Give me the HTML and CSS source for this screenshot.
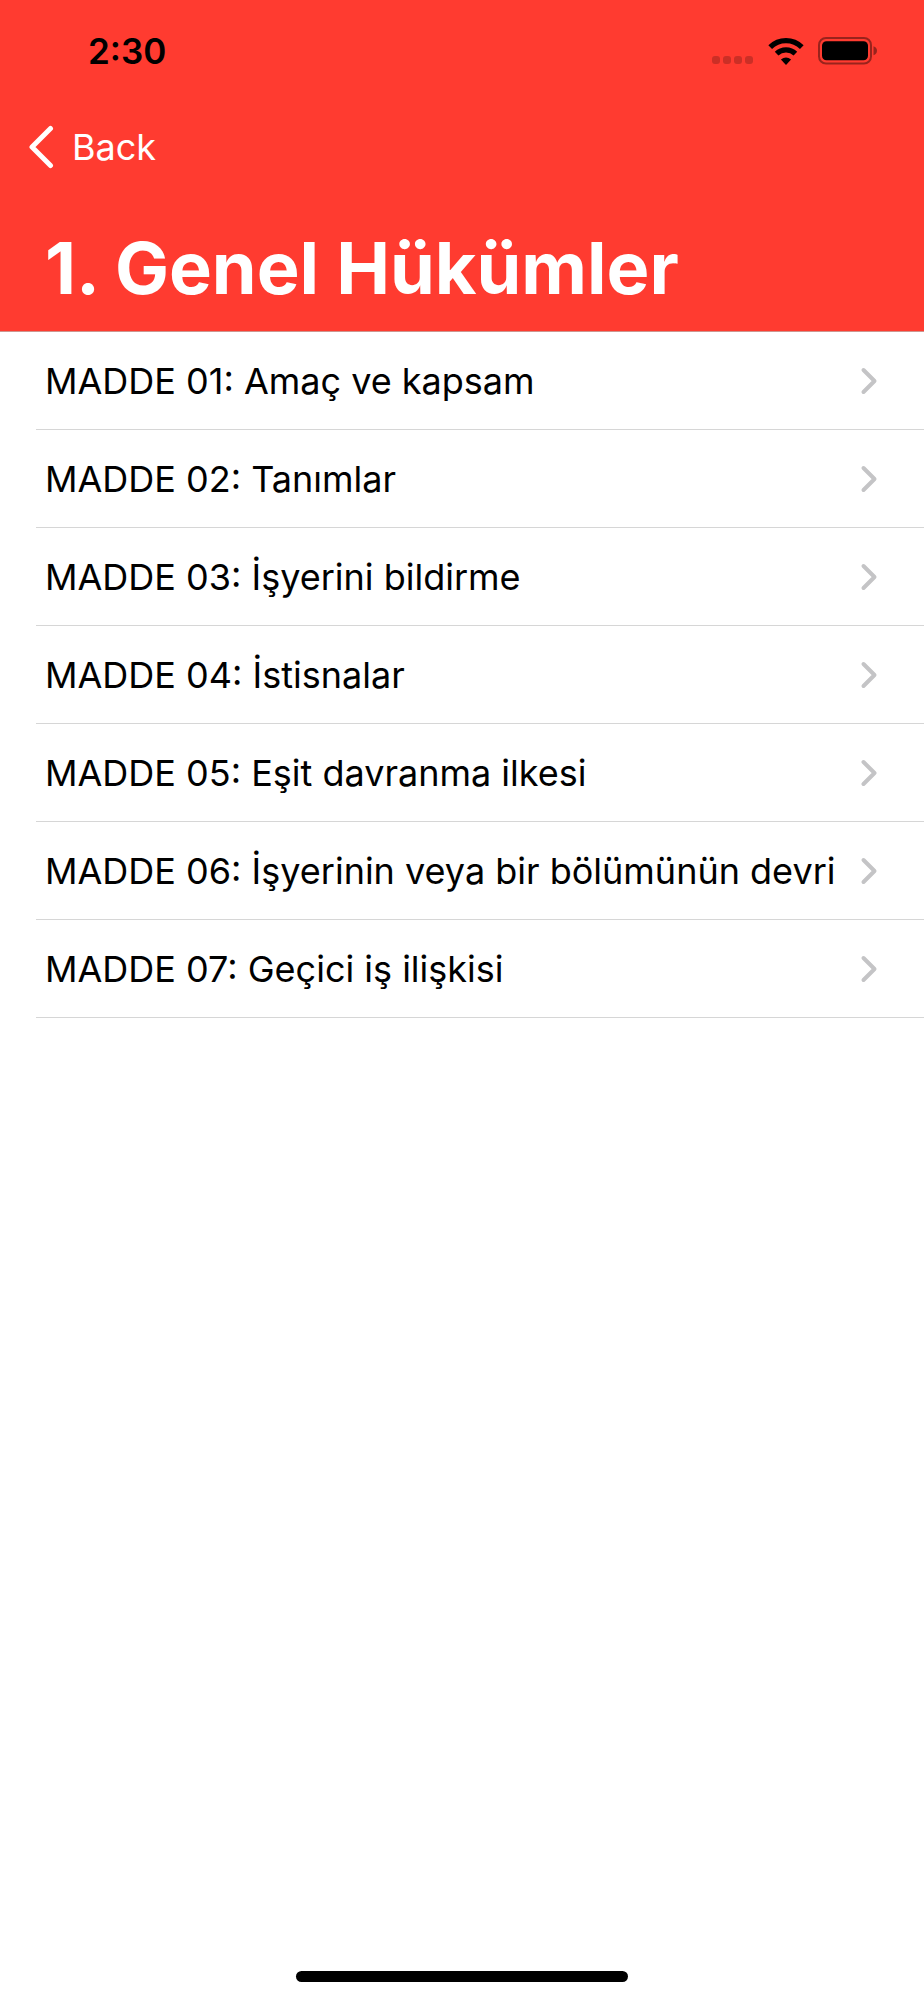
FILE: index.html
```html
<!DOCTYPE html>
<html lang="tr">
<head>
<meta charset="utf-8">
<meta name="viewport" content="width=device-width, initial-scale=1">
<title>1. Genel Hükümler</title>
<link rel="stylesheet" href="styles.css">
</head>
<body>
<div class="screen">
  <header class="header">
    <div class="status">
      <time class="status-time">2:30</time>
      <div class="status-icons">
        <svg class="signal" viewBox="0 0 42 8" aria-hidden="true"><rect x="0" width="8" height="8" rx="3"/><rect x="11" width="8" height="8" rx="3"/><rect x="22" width="8" height="8" rx="3"/><rect x="33" width="8" height="8" rx="3"/></svg>
        <svg class="wifi" viewBox="0 0 36 27" aria-hidden="true"><path d="M2.200 9.200A22.500 22.500 0 0 1 33.800 9.200" stroke-width="5.200"/><path d="M8.600 15.600A13.500 13.500 0 0 1 27.400 15.600" stroke-width="5.200"/><path class="wifi-dot" d="M18 27L12.900 21.600Q18 17.200 23.100 21.600Z"/></svg>
        <svg class="battery" viewBox="0 0 60 28" aria-hidden="true"><rect class="battery-shell" x="1" y="1" width="52" height="25.500" rx="7"/><rect x="4" y="4.300" width="46" height="19" rx="4.500"/><path class="battery-cap" d="M55.500 9.300Q59 10.500 59 13.800Q59 17 55.500 18.300Z"/></svg>
      </div>
    </div>
    <nav class="nav">
      <button class="back" type="button">
        <svg class="back-icon" viewBox="0 0 26 44" aria-hidden="true"><path d="M22.500 3.500L4 22L22.500 40.500"/></svg>
        <span>Back</span>
      </button>
    </nav>
    <h1 class="title">1. Genel Hükümler</h1>
  </header>
  <main class="content">
    <ul class="list">
      <li class="item"><a class="row" href="#madde-01"><span>MADDE 01: Amaç ve kapsam</span><svg class="chevron" viewBox="0 0 18 28" aria-hidden="true"><path d="M3.500 3L14.500 14L3.500 25"/></svg></a></li>
      <li class="item"><a class="row" href="#madde-02"><span>MADDE 02: Tanımlar</span><svg class="chevron" viewBox="0 0 18 28" aria-hidden="true"><path d="M3.500 3L14.500 14L3.500 25"/></svg></a></li>
      <li class="item"><a class="row" href="#madde-03"><span>MADDE 03: İşyerini bildirme</span><svg class="chevron" viewBox="0 0 18 28" aria-hidden="true"><path d="M3.500 3L14.500 14L3.500 25"/></svg></a></li>
      <li class="item"><a class="row" href="#madde-04"><span>MADDE 04: İstisnalar</span><svg class="chevron" viewBox="0 0 18 28" aria-hidden="true"><path d="M3.500 3L14.500 14L3.500 25"/></svg></a></li>
      <li class="item"><a class="row" href="#madde-05"><span>MADDE 05: Eşit davranma ilkesi</span><svg class="chevron" viewBox="0 0 18 28" aria-hidden="true"><path d="M3.500 3L14.500 14L3.500 25"/></svg></a></li>
      <li class="item"><a class="row" href="#madde-06"><span>MADDE 06: İşyerinin veya bir bölümünün devri</span><svg class="chevron" viewBox="0 0 18 28" aria-hidden="true"><path d="M3.500 3L14.500 14L3.500 25"/></svg></a></li>
      <li class="item"><a class="row" href="#madde-07"><span>MADDE 07: Geçici iş ilişkisi</span><svg class="chevron" viewBox="0 0 18 28" aria-hidden="true"><path d="M3.500 3L14.500 14L3.500 25"/></svg></a></li>
    </ul>
  </main>
  <footer class="footer"><div class="home-bar"></div></footer>
</div>
</body>
</html>
```
FILE: styles.css
```css
* { box-sizing: border-box; }
body {
  margin: 0;
  background: #fff;
  color: #000;
  font-family: Inter, "Liberation Sans", sans-serif;
}
.screen {
  display: flex;
  flex-direction: column;
  min-height: 100vh;
}
.header {
  background: #ff3b30;
  border-bottom: 1px solid #cd958f;
}
.status {
  display: flex;
  align-items: center;
  justify-content: space-between;
  height: 104px;
  padding: 0 46px 2px 88px;
}
.status-time {
  font-size: 35px;
  line-height: 44px;
  font-weight: 600;
}
.status-icons {
  display: flex;
  align-items: center;
  gap: 14px;
}
.signal { width: 42px; height: 8px; margin-top: 18px; opacity: 0.2; }
.wifi { width: 36px; height: 27px; fill: none; stroke: #000; }
.wifi-dot { fill: #000; stroke: none; }
.battery { width: 60px; height: 28px; }
.battery-shell { fill: none; stroke: #000; stroke-width: 2; opacity: 0.4; }
.battery-cap { opacity: 0.4; }
.nav {
  display: flex;
  align-items: center;
  height: 88px;
  padding: 0 28px 2px;
}
.back {
  display: flex;
  align-items: center;
  gap: 18px;
  padding: 0;
  border: 0;
  background: none;
  color: #fff;
  font: inherit;
  font-size: 36px;
  line-height: 48px;
}
.back-icon {
  width: 26px;
  height: 44px;
  fill: none;
  stroke: #fff;
  stroke-width: 5;
  stroke-linecap: round;
  stroke-linejoin: round;
}
.title {
  margin: 0;
  padding: 32px 45px 19px;
  color: #fff;
  font-size: 72px;
  line-height: 88px;
  font-weight: 700;
}
.content { flex: 1; }
.list {
  margin: 0;
  padding: 0 0 0 36px;
  list-style: none;
}
.item { border-bottom: 1px solid #d6d6d6; }
.row {
  display: flex;
  align-items: center;
  justify-content: space-between;
  min-height: 97px;
  padding: 1px 46px 0 9px;
  color: #000;
  font-size: 36px;
  line-height: 48px;
  text-decoration: none;
}
.chevron {
  flex: none;
  width: 18px;
  height: 28px;
  fill: none;
  stroke: #c4c4c6;
  stroke-width: 4;
  stroke-linecap: round;
  stroke-linejoin: round;
}
.footer {
  display: flex;
  justify-content: center;
  padding-bottom: 18px;
}
.home-bar {
  width: 36%;
  height: 11px;
  border-radius: 6px;
  background: #000;
}
```
